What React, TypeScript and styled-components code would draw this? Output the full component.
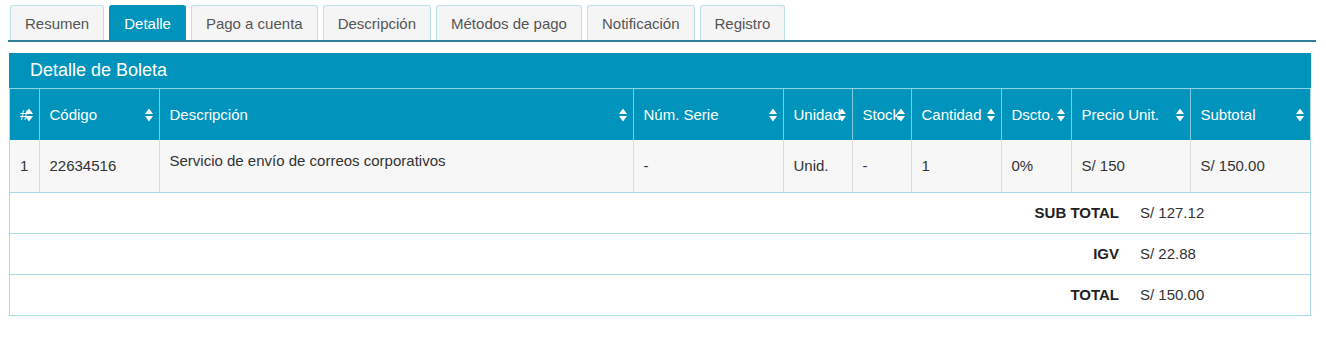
import React from "react";
import styled, { createGlobalStyle } from "styled-components";

const Global = createGlobalStyle`
  body { margin: 0; background: #fff; font-family: "Liberation Sans", Arial, sans-serif; font-size: 15px; color: #333; }
`;

const Page = styled.div`
  padding: 5px 8px 0 8px;
  width: 1310px;
  box-sizing: border-box;
`;

const Tabs = styled.ul`
  display: flex;
  gap: 5px;
  list-style: none;
  margin: 0;
  padding: 0 0 0 2px;
  border-bottom: 2px solid #2f7f98;
  width: 1308px;
  box-sizing: border-box;
`;

const Tab = styled.li<{ $active?: boolean }>`
  height: 34px;
  display: flex;
  align-items: center;
  padding: 0 14px;
  border: 1px solid ${(p) => (p.$active ? "#0093bb" : "#bde1ec")};
  border-bottom: none;
  border-radius: 3px 3px 0 0;
  background: ${(p) => (p.$active ? "#0093bb" : "#f5f5f5")};
  color: ${(p) => (p.$active ? "#fff" : "#555")};
  font-size: 15px;
`;

const Panel = styled.section`
  margin: 11px 0 0 1px;
  width: 1302px;
  border: 1px solid #a9dbe8;
  border-top: none;
  box-sizing: border-box;
`;

const PanelTitle = styled.div`
  background: #0093bb;
  color: #fff;
  height: 36px;
  display: flex;
  align-items: center;
  padding-left: 21px;
  font-size: 18px;
  border-bottom: 1px solid #8ed3e6;
  box-sizing: border-box;
  margin: 0 -1px;
`;

const Table = styled.table`
  width: 100%;
  border-collapse: collapse;
  table-layout: fixed;
`;

const Th = styled.th`
  position: relative;
  background: #0093bb;
  color: #fff;
  font-weight: normal;
  text-align: left;
  height: 51px;
  padding: 0 10px;
  border-left: 1px solid #7fcbe0;
  white-space: nowrap;
  overflow: visible;
  font-size: 15px;
  &:first-child { border-left: none; }
`;

const Sort = styled.svg`
  position: absolute;
  right: 6px;
  top: 50%;
  transform: translateY(-50%);
`;

const Td = styled.td<{ $top?: boolean }>`
  background: #f7f7f7;
  height: 52px;
  padding: ${(p) => (p.$top ? "12px 10px 0 10px" : "0 10px")};
  vertical-align: ${(p) => (p.$top ? "top" : "middle")};
  border-left: 1px solid #dcdcdc;
  border-bottom: 1px solid #a9dbe8;
  font-size: 15px;
  color: #333;
  box-sizing: border-box;
  &:first-child { border-left: none; }
`;

const Totals = styled.div`
  display: grid;
  grid-template-columns: 1fr 180px;
`;

const TotalLabel = styled.div<{ $last?: boolean }>`
  height: 40px;
  display: flex;
  align-items: center;
  justify-content: flex-end;
  padding-right: 11px;
  font-weight: bold;
  color: #222;
  border-bottom: ${(p) => (p.$last ? "none" : "1px solid #a9dbe8")};
`;

const TotalValue = styled.div<{ $last?: boolean }>`
  height: 40px;
  display: flex;
  align-items: center;
  padding-left: 10px;
  color: #333;
  border-bottom: ${(p) => (p.$last ? "none" : "1px solid #a9dbe8")};
`;

const SortIcon = () => (
  <Sort width="8" height="13" viewBox="0 0 8 13">
    <path d="M4 0 L8 5.5 H0 Z" fill="#fff" />
    <path d="M4 13 L8 7.5 H0 Z" fill="#fff" />
  </Sort>
);

const cols = [
  { label: "#", w: 29 },
  { label: "Código", w: 120 },
  { label: "Descripción", w: 474 },
  { label: "Núm. Serie", w: 150 },
  { label: "Unidad", w: 69 },
  { label: "Stock", w: 59 },
  { label: "Cantidad", w: 90 },
  { label: "Dscto.", w: 70 },
  { label: "Precio Unit.", w: 119 },
  { label: "Subtotal", w: 120 },
];

const row = ["1", "22634516", "Servicio de envío de correos corporativos", "-", "Unid.", "-", "1", "0%", "S/ 150", "S/ 150.00"];

const totals = [
  ["SUB TOTAL", "S/ 127.12"],
  ["IGV", "S/ 22.88"],
  ["TOTAL", "S/ 150.00"],
];

const tabs = ["Resumen", "Detalle", "Pago a cuenta", "Descripción", "Métodos de pago", "Notificación", "Registro"];

export default function App() {
  return (
    <>
      <Global />
      <Page>
        <Tabs>
          {tabs.map((t) => (
            <Tab key={t} $active={t === "Detalle"}>{t}</Tab>
          ))}
        </Tabs>
        <Panel>
          <PanelTitle>Detalle de Boleta</PanelTitle>
          <Table>
            <colgroup>
              {cols.map((c) => (
                <col key={c.label} style={{ width: c.w }} />
              ))}
            </colgroup>
            <thead>
              <tr>
                {cols.map((c) => (
                  <Th key={c.label}>
                    {c.label}
                    <SortIcon />
                  </Th>
                ))}
              </tr>
            </thead>
            <tbody>
              <tr>
                {row.map((v, i) => (
                  <Td key={i} $top={i === 2}>{v}</Td>
                ))}
              </tr>
            </tbody>
          </Table>
          <Totals>
            {totals.map(([l, v], i) => (
              <React.Fragment key={l}>
                <TotalLabel $last={i === totals.length - 1}>{l}</TotalLabel>
                <TotalValue $last={i === totals.length - 1}>{v}</TotalValue>
              </React.Fragment>
            ))}
          </Totals>
        </Panel>
      </Page>
    </>
  );
}
